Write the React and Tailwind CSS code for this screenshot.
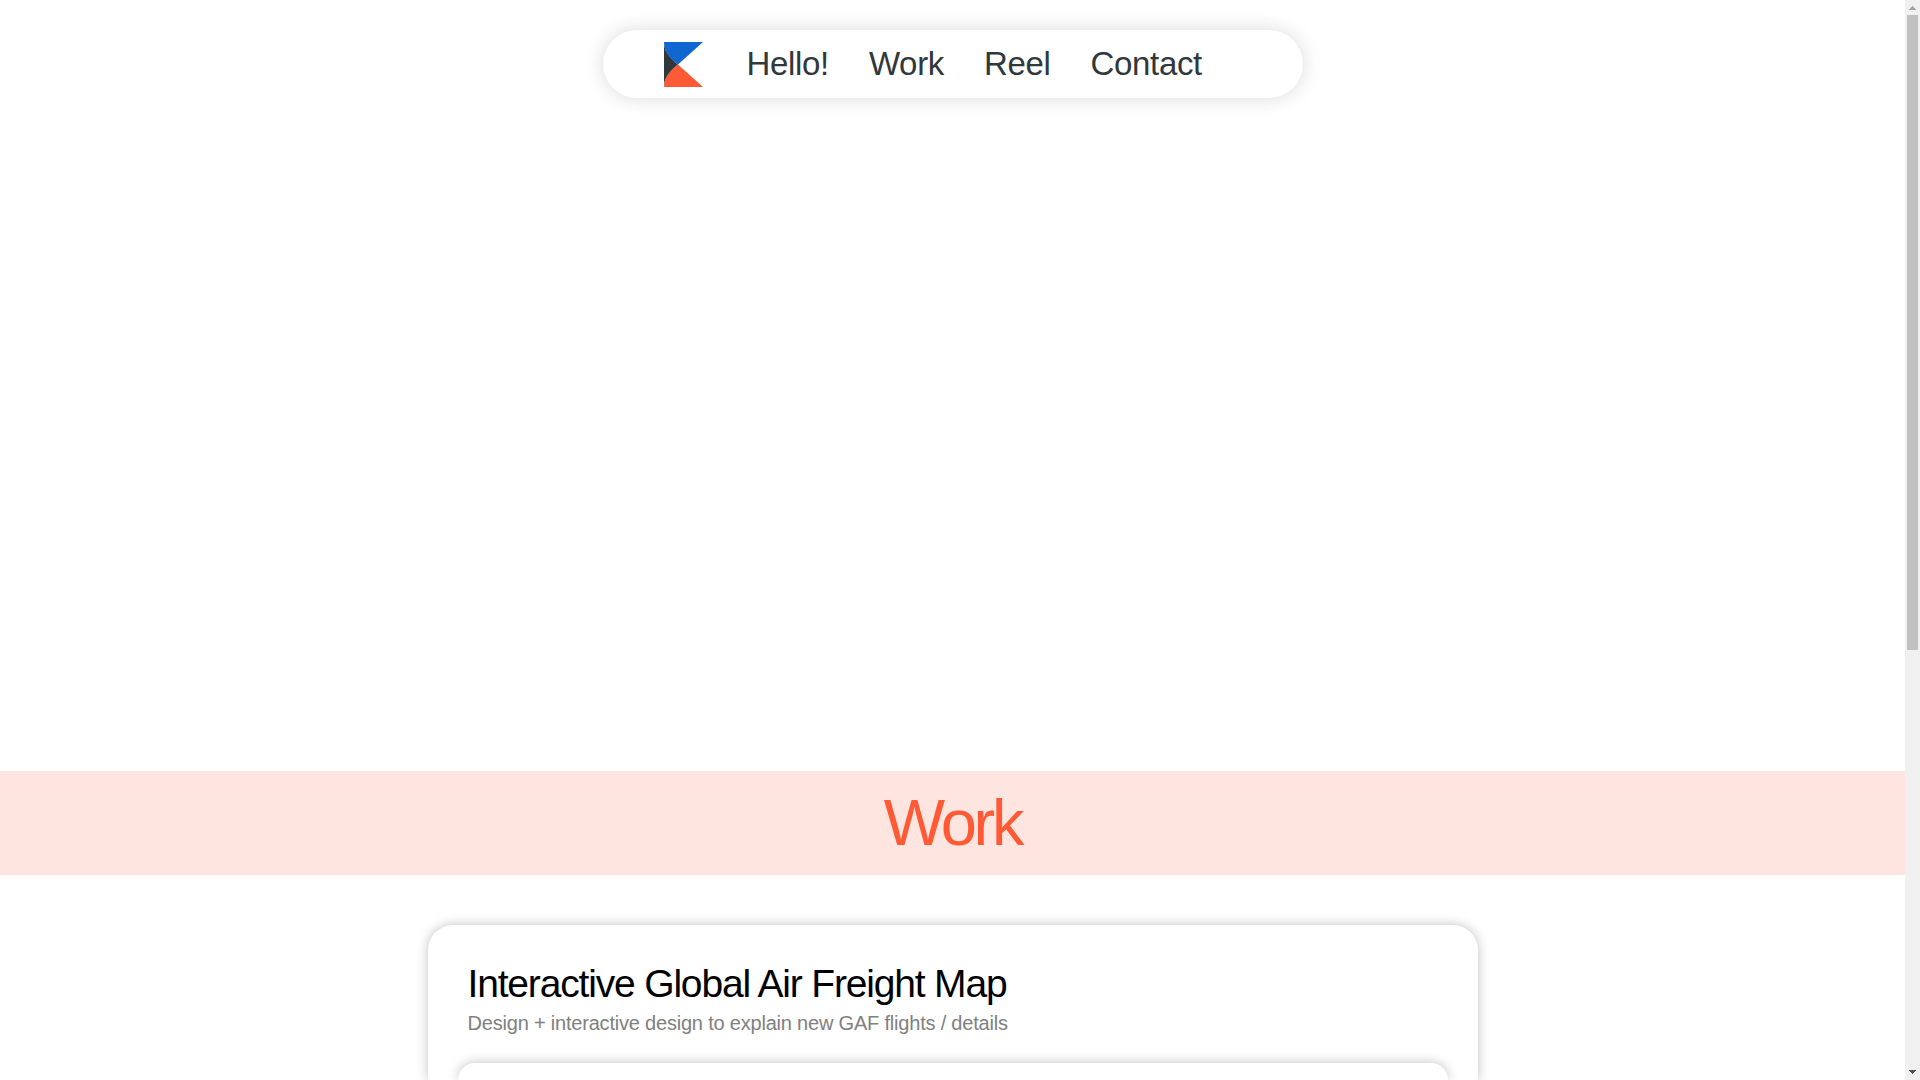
import React from "react";

const links = [
  { label: "Hello!", href: "#hello" },
  { label: "Work", href: "#work" },
  { label: "Reel", href: "#reel" },
  { label: "Contact", href: "#contact" },
];

function Logo() {
  return (
    <svg viewBox="0 0 39 45" className="h-[45px] w-[39px]" aria-hidden="true">
      <path d="M0 0H39L14 22.5C6 17 0 10 0 0Z" fill="#1067d2" />
      <path d="M0 45H39L14 22.5C6 28 0 35 0 45Z" fill="#ff5a35" />
      <path d="M0 2C1 11 7 17 14 22.5C7 28 1 34 0 43Z" fill="#30383b" />
    </svg>
  );
}

function Navigation() {
  return (
    <nav className="mx-auto flex h-[68px] w-full max-w-[700px] items-center rounded-full bg-white pl-[61px] shadow-[0_0_20px_rgba(0,0,0,0.15)]">
      <a href="#home" aria-label="Home">
        <Logo />
      </a>
      <ul className="ml-11 flex gap-10 text-[33px] leading-10 tracking-[-0.01em] text-[#30383b]">
        {links.map((link) => (
          <li key={link.label}>
            <a href={link.href}>{link.label}</a>
          </li>
        ))}
      </ul>
    </nav>
  );
}

function ProjectCard() {
  return (
    <article className="mx-auto w-full max-w-[1050px] rounded-t-[25px] bg-white px-[30px] pt-9 shadow-[0_0_12px_rgba(0,0,0,0.25)]">
      <div className="px-[10px]">
        <h2 className="text-[39px] leading-[46px] tracking-[-0.03em] text-black">Interactive Global Air Freight Map</h2>
        <p className="mt-1 text-xl leading-6 tracking-[-0.01em] text-[#808080]">
          Design + interactive design to explain new GAF flights / details
        </p>
      </div>
      <div className="mt-7 h-[17px] rounded-t-[20px] bg-white shadow-[0_0_12px_rgba(0,0,0,0.25)]" />
    </article>
  );
}

function ScrollRail() {
  return (
    <div className="flex w-[15px] shrink-0 flex-col items-center bg-[#f0f0f0]" aria-hidden="true">
      <svg viewBox="0 0 15 15" className="h-[15px] w-[15px] shrink-0" shapeRendering="crispEdges">
        <path d="M7 6h1v1h1v1h1v1h1v1H4V9h1V8h1V7h1z" fill="#a3a3a3" />
      </svg>
      <div className="h-[635px] w-[11px] bg-[#c1c1c1]" />
      <svg viewBox="0 0 15 15" className="mt-auto h-[15px] w-[15px] shrink-0" shapeRendering="crispEdges">
        <path d="M4 5h7v1h-1v1H9v1H8v1H7V8H6V7H5V6H4z" fill="#505050" />
      </svg>
    </div>
  );
}

export default function App() {
  return (
    <div className="flex h-screen overflow-hidden bg-white font-['Liberation_Sans',Arial,sans-serif]">
      <div className="min-w-0 flex-1 overflow-hidden">
        <header className="h-[771px] pt-[30px]">
          <Navigation />
        </header>
        <main>
          <h1 className="bg-[#ffe5e0] py-4 text-center text-[65px] leading-[72px] tracking-tighter text-[#ff5a35]">Work</h1>
          <section className="pt-[50px]">
            <ProjectCard />
          </section>
        </main>
      </div>
      <ScrollRail />
    </div>
  );
}
